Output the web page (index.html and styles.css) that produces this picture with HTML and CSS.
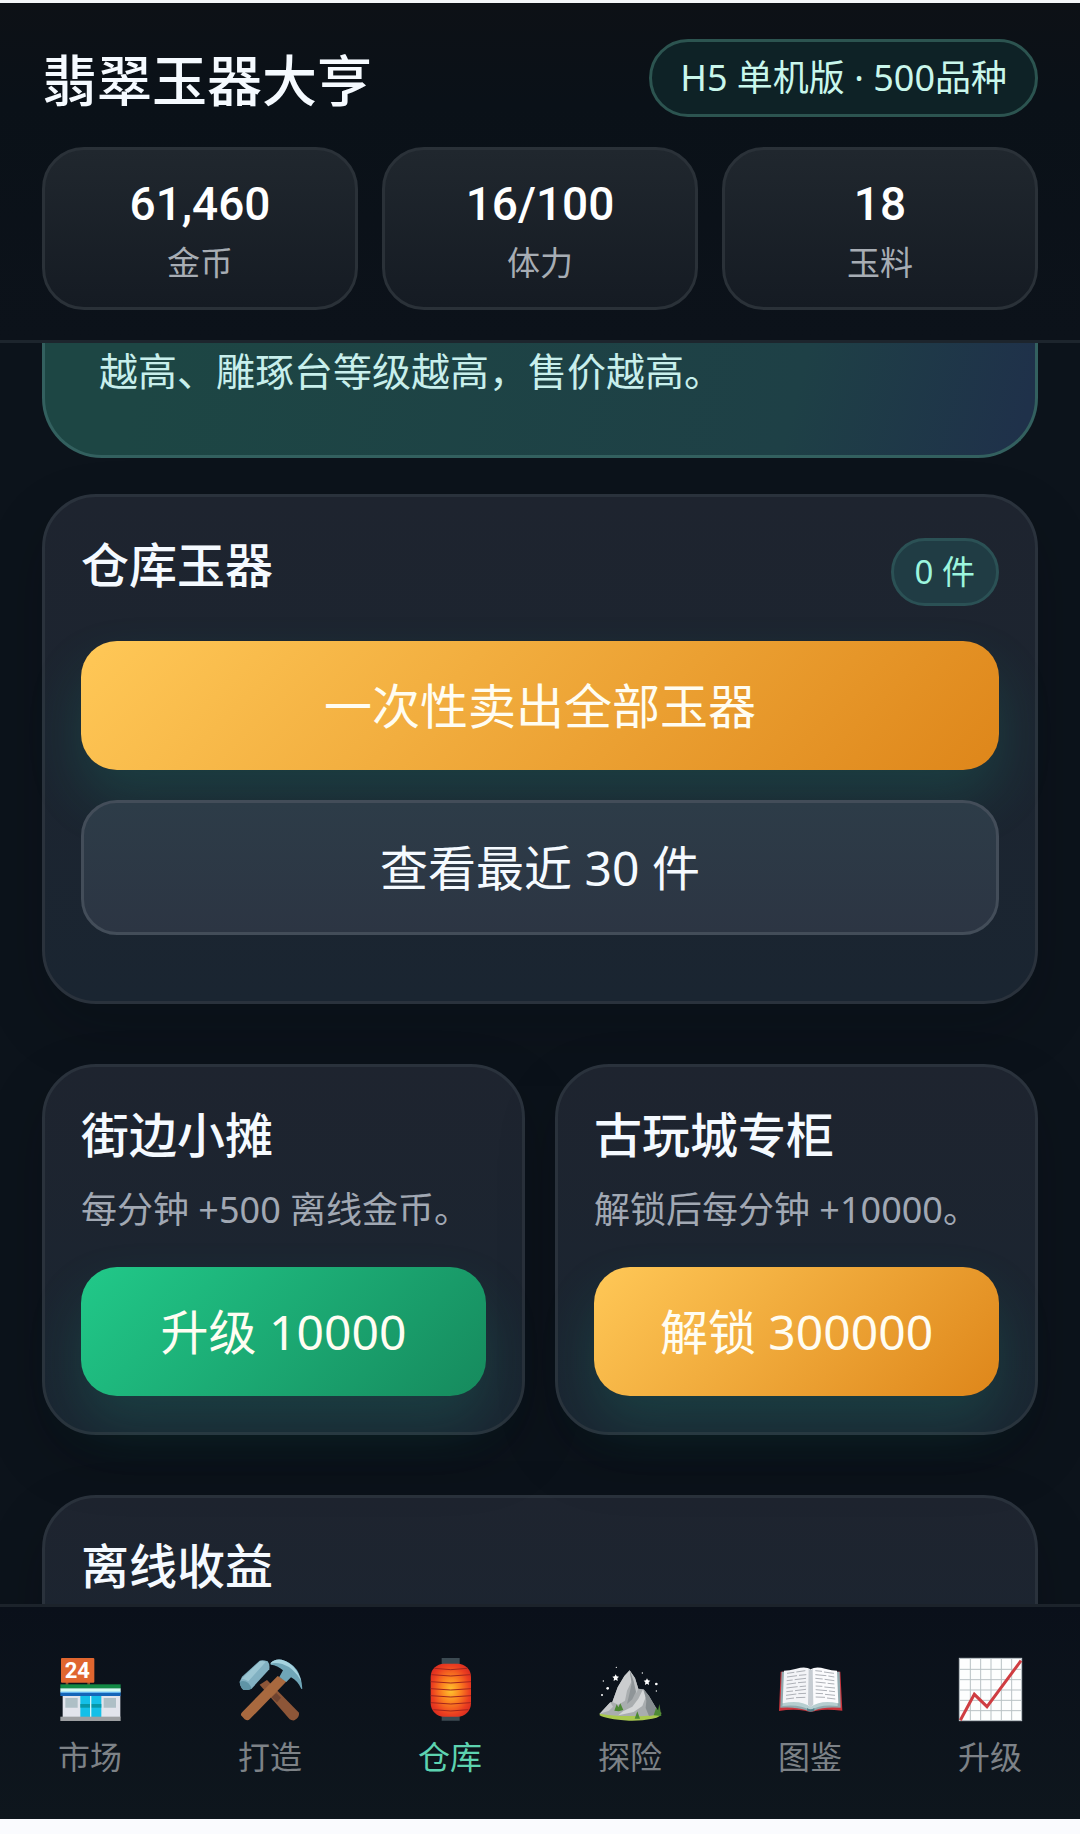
FILE: index.html
```html
<!DOCTYPE html>
<html lang="zh-CN">
<head>
<meta charset="utf-8">
<meta name="viewport" content="width=device-width, initial-scale=1">
<title>翡翠玉器大亨</title>
<link rel="stylesheet" href="styles.css">
</head>
<body>
<div class="app">
  <header class="topbar">
    <div class="topbar-row">
      <h1 class="title">翡翠玉器大亨</h1>
      <span class="pill">H5 单机版 · 500品种</span>
    </div>
    <dl class="stats">
      <div class="stat"><dd>61,460</dd><dt>金币</dt></div>
      <div class="stat"><dd>16/100</dd><dt>体力</dt></div>
      <div class="stat"><dd>18</dd><dt>玉料</dt></div>
    </dl>
  </header>

  <main class="content">
    <section class="hero">
      <p>越高、雕琢台等级越高，售价越高。</p>
    </section>

    <section class="card">
      <div class="card-head">
        <h2>仓库玉器</h2>
        <span class="badge">0 件</span>
      </div>
      <div class="actions">
        <button class="btn btn-gold" type="button">一次性卖出全部玉器</button>
        <button class="btn btn-ghost" type="button">查看最近 30 件</button>
        <div class="item-list"></div>
      </div>
    </section>

    <div class="grid">
      <section class="card">
        <h2>街边小摊</h2>
        <p class="desc">每分钟 +500 离线金币。</p>
        <button class="btn btn-green" type="button">升级 10000</button>
      </section>
      <section class="card">
        <h2>古玩城专柜</h2>
        <p class="desc">解锁后每分钟 +10000。</p>
        <button class="btn btn-gold" type="button">解锁 300000</button>
      </section>
    </div>

    <section class="card card-last">
      <h2>离线收益</h2>
    </section>
  </main>

  <nav class="tabbar">
    <button class="tab" type="button">
      <svg class="icon" viewBox="0 0 189 189" aria-hidden="true">
        <path fill="#8a4a2c" d="M20 70h8v12h-8zM85 70h8v12h-8z"/>
        <rect x="6" y="0" width="100" height="74" rx="3" fill="#e0662f"/>
        <text x="55" y="61" class="sign" text-anchor="middle">24</text>
        <rect x="11" y="110" width="173" height="68" fill="#e2e4ec"/>
        <rect x="4" y="79" width="181" height="13" fill="#128a45"/>
        <rect x="4" y="91" width="181" height="11" fill="#d3fbf2"/>
        <rect x="4" y="101" width="181" height="5" fill="#63b5f0"/>
        <rect x="4" y="105" width="181" height="9" fill="#1565b8"/>
        <path fill="#aebfc6" d="M19 120h37v29H19zM134 120h37v29h-37z"/>
        <rect x="64" y="114" width="63" height="63" fill="#14bfe8"/>
        <rect x="64" y="138" width="63" height="11" fill="#0797a8"/>
        <rect x="93" y="114" width="4" height="63" fill="#d9f5fa"/>
        <rect x="4" y="176" width="181" height="13" fill="#9d9fa2"/>
      </svg>
      <span>市场</span>
    </button>
    <button class="tab" type="button">
      <svg class="icon" viewBox="0 0 189 189" aria-hidden="true">
        <path fill="#8d5638" d="M62 80L84 66 180 164Q182 178 166 187 158 188 152 184Z"/>
        <path fill="#6f4330" d="M98 118l14-13 14 14-12 14z"/>
        <path fill="#a8693f" d="M116 54L143 70 32 184Q26 190 17 184L6 172Q5 166 10 162Z"/>
        <path fill="#82b1c2" d="M2 71L9 56 62 8Q70 4 86 10 93 18 91 34L38 92Q24 98 13 95 3 86 2 71Z"/>
        <path fill="#5f94a6" d="M2 71Q16 66 28 75 36 84 38 92 24 98 13 95 3 86 2 71Z"/>
        <path fill="#9cc6d3" d="M8 62L64 9Q72 8 80 12L28 70Q18 62 8 62Z"/>
        <path fill="#6fa5b7" d="M95 15Q106 2 128 5 186 20 190 92L187 93Q176 68 156 58L142 72 121 57 132 37Q116 22 95 20Z"/>
        <path fill="#a6d3df" d="M95 15Q106 2 128 5 172 18 187 70 166 30 130 18 108 12 95 17Z"/>
      </svg>
      <span>打造</span>
    </button>
    <button class="tab tab-active" type="button" aria-current="page">
      <svg class="icon" viewBox="0 0 189 189" aria-hidden="true">
        <defs>
          <radialGradient id="glow" cx="50%" cy="50%" r="58%">
            <stop offset="0" stop-color="#ffc42e"/>
            <stop offset=".4" stop-color="#fb8320"/>
            <stop offset=".8" stop-color="#ec3f20"/>
            <stop offset="1" stop-color="#dc2e20"/>
          </radialGradient>
        </defs>
        <path fill="#3c4a52" d="M68 0h54v20H68zM68 172h54v16H68z"/>
        <rect x="35" y="17" width="121" height="159" rx="40" fill="url(#glow)"/>
        <path fill="none" stroke="#a3251d" stroke-width="3" d="M46 31q49 8 99 0M37 50q58 8 117 0M35 71q60 8 121 0M35 92q60 8 121 0M35 113q60 8 121 0M36 134q59 8 119 0M43 155q52 8 105 0"/>
      </svg>
      <span>仓库</span>
    </button>
    <button class="tab" type="button">
      <svg class="icon" viewBox="0 0 189 189" aria-hidden="true">
        <path fill="#a9c94f" d="M2 166Q50 154 95 155 150 156 187 164 189 176 160 182 128 189 90 188 20 184 2 172Z"/>
        <path fill="#a9adaf" d="M2 167L34 133 40 132 56 88 76 54 92 37 108 60 118 92 134 94 150 114 182 168Q150 176 110 174 50 176 2 167Z"/>
        <path fill="#cbcdcf" d="M92 37L76 54 56 88 40 132 58 140 78 128 84 98 98 70Z"/>
        <path fill="#8f9598" d="M92 37L104 62 112 98 100 124 84 138 92 104 98 76Z"/>
        <path fill="#bfc2c4" d="M92 37L108 60 118 92 112 106 104 70Z"/>
        <path fill="#d5d7d8" d="M132 94L118 122 100 146 72 160 58 172 104 162 130 144 140 118Z"/>
        <path fill="#868d90" d="M134 94L150 114 182 168 150 174 140 150 142 128Z"/>
        <path fill="#c8cacc" d="M2 167L34 133 42 146 30 158Z"/>
        <path fill="#4d8a34" d="M46 158l7-19 5 9 6-12 9 20-14 4zM107 182l8-22 8 22zM164 172l8-24 5 10 4-20 6 36z"/>
        <g fill="#fff">
          <path d="M50 49l3 6 7 1-5 5 1 8-6-4-6 4 1-8-5-5 7-1zM144 61l3 6 7 1-5 5 1 8-6-4-6 4 1-8-5-5 7-1z"/>
          <circle cx="52" cy="28" r="2"/><circle cx="130" cy="45" r="2"/><circle cx="13" cy="69" r="2"/>
          <circle cx="26" cy="91" r="4"/><circle cx="9" cy="111" r="3"/><circle cx="172" cy="78" r="4"/><circle cx="172" cy="99" r="2"/>
        </g>
      </svg>
      <span>探险</span>
    </button>
    <button class="tab" type="button">
      <svg class="icon" viewBox="0 0 189 189" aria-hidden="true">
        <path fill="#c9333b" d="M5 41H184L190 158Q140 152 112 158 95 164 78 158 40 152 0 159Z"/>
        <path fill="#8fa9ae" d="M8 41h174l3 108Q130 146 110 156 95 164 80 156 50 146 4 149Z"/>
        <path fill="#b6ced0" d="M13 128h163v16Q122 138 95 157 62 138 10 144Z"/>
        <path fill="#f3f4f7" d="M95 34Q80 24 52 32 30 38 15 38L11 136Q62 124 95 146Z"/>
        <path fill="#fbfbfd" d="M95 34Q110 24 138 32 160 38 174 38L178 136Q128 124 95 146Z"/>
        <path fill="#c6ccd2" d="M89 32Q95 40 101 32L103 140 95 148 87 140Z"/>
        <path fill="none" stroke="#9da1a8" stroke-width="2.5" d="M24 46l22-3M52 42l27-4M24 57l30-4M60 52l22-2M23 68l18-2M47 65l34-4M23 79l28-4M57 74l24-2M22 90l34-4M62 86l19-2M22 101l20-2M48 98l33-4M21 112l31-4M58 107l23-1M21 123l24-3M51 119l28-1M109 38l20 2M135 42l30 4M109 50l33 3M148 54l18 3M109 61l22 2M137 64l29 4M110 72l30 3M146 76l20 2M110 84l20 1M136 87l32 3M110 95l34 3M150 99l18 2M110 106l22 1M138 109l30 3M110 117l28 1M144 120l25 3"/>
        <path fill="#57808a" d="M84 150q11 8 22 0v8q-11 6-22 0z"/>
      </svg>
      <span>图鉴</span>
    </button>
    <button class="tab" type="button">
      <svg class="icon" viewBox="0 0 189 189" aria-hidden="true">
        <rect x="1" y="1" width="187" height="187" fill="#fdfefe" stroke="#bcc4c8" stroke-width="3"/>
        <path fill="none" stroke="#b9c2c5" stroke-width="3" d="M34 1v187M65 1v187M96 1v187M127 1v187M158 1v187M1 34h187M1 65h187M1 96h187M1 127h187M1 158h187"/>
        <path fill="none" stroke="#cf3d42" stroke-width="9" d="M4 187L46 109 84 146 186 8"/>
      </svg>
      <span>升级</span>
    </button>
  </nav>
</div>
</body>
</html>
```
FILE: styles.css
```css
* {
  box-sizing: border-box;
}

body {
  margin: 0;
  background: #fafbfe;
  color: #f5faff;
  font-family: "Noto Sans", "Noto Sans CJK SC", sans-serif;
}

h1,
h2,
p,
dl,
dd,
dt {
  margin: 0;
}

button {
  font-family: inherit;
  cursor: pointer;
}

.app {
  display: flex;
  flex-direction: column;
  height: 100vh;
  border-top: 3px solid #f4f6f8;
  border-bottom: 15px solid #fafbfe;
  background: #0c131b;
}

/* Header */

.topbar {
  padding: 36px 42px 30px;
  border-bottom: 3px solid #1d252d;
  background: linear-gradient(180deg, #0d1116, #0a1118 30%, #0c121a);
}

.topbar-row {
  display: flex;
  align-items: center;
  justify-content: space-between;
  margin-bottom: 30px;
}

.title {
  padding-top: 4px;
  font-size: 55px;
  line-height: 72px;
  font-weight: 500;
}

.pill {
  padding: 0 28px;
  border: 3px solid #2c5450;
  border-radius: 39px;
  background: #0e2226;
  color: #c9f7ec;
  font-size: 36px;
  line-height: 72px;
}

.stats {
  display: grid;
  grid-template-columns: repeat(3, 1fr);
  gap: 24px;
}

.stat {
  display: flex;
  flex-direction: column;
  gap: 6px;
  padding: 24px 12px 21px;
  border: 3px solid #2a3138;
  border-radius: 42px;
  background: linear-gradient(180deg, #20272e, #151b23);
  text-align: center;
}

.stat dd {
  font-family: Roboto, sans-serif;
  font-size: 46px;
  line-height: 60px;
  font-weight: 500;
  color: #fff;
}

.stat dt {
  font-size: 33px;
  line-height: 46px;
  color: #a7adb4;
}

/* Scrolling content */

.content {
  flex: 1;
  min-height: 0;
  padding: 0 42px;
  overflow: hidden auto;
  scrollbar-width: none;
}

.hero {
  margin-bottom: 36px;
  padding: 0 54px 56px;
  border: 3px solid #33605f;
  border-top: 0;
  border-radius: 0 0 60px 60px;
  background: linear-gradient(105deg, #1d4644 10%, #1e4046 75%, #1f314a 98%);
  color: #c8efec;
  font-size: 39px;
  line-height: 56px;
}

.card {
  padding: 36px;
  border: 3px solid #2a323c;
  border-radius: 54px;
  background: linear-gradient(180deg, #1e242f, #1a2531);
  box-shadow: 0 24px 60px rgba(4, 8, 16, .2);
  margin-bottom: 60px;
}

.card h2 {
  margin-bottom: 14px;
  font-size: 48px;
  line-height: 64px;
  font-weight: 500;
}

.card-head {
  display: flex;
  align-items: center;
  justify-content: space-between;
  margin-bottom: 30px;
}

.badge {
  padding: 0 21px;
  border: 3px solid #2b5155;
  border-radius: 34px;
  background: #203c44;
  color: #9cf5de;
  font-size: 33px;
  line-height: 62px;
}

.actions {
  display: flex;
  flex-direction: column;
  gap: 30px;
}

.grid {
  display: grid;
  grid-template-columns: repeat(2, 1fr);
  gap: 30px;
}

.desc {
  margin-bottom: 28px;
  color: #a1a8b3;
  font-size: 36px;
  line-height: 58px;
}

.btn {
  display: block;
  width: 100%;
  padding: 33px 24px;
  border: 0;
  border-radius: 36px;
  color: #fffdf2;
  font-size: 48px;
  line-height: 63px;
  box-shadow: 0 28px 54px rgba(30, 180, 145, .18);
}

.btn-gold {
  background: linear-gradient(135deg, #ffc857, #de861a);
}

.btn-green {
  background: linear-gradient(135deg, #21c989, #168a5d);
}

.btn-ghost {
  border: 3px solid #434d59;
  background: linear-gradient(180deg, #2d3c48, #2c3543);
  color: #f5faff;
  box-shadow: none;
}

.card-last {
  padding-bottom: 120px;
}

/* Bottom tabs */

.tabbar {
  display: grid;
  grid-template-columns: repeat(6, 1fr);
  padding: 51px 0 38px;
  border-top: 3px solid #1c232b;
  background: linear-gradient(180deg, #0a101a, #0e161d);
}

.tab {
  display: flex;
  flex-direction: column;
  align-items: center;
  gap: 12px;
  padding: 0;
  border: 0;
  background: none;
  color: #7d8287;
  font-size: 32px;
  line-height: 48px;
}

.tab-active {
  color: #5dd3b0;
}

.icon {
  width: 63px;
  height: 63px;
  overflow: visible;
}

.sign {
  fill: #fff;
  font-family: Roboto, sans-serif;
  font-size: 66px;
  font-weight: 700;
}
```
